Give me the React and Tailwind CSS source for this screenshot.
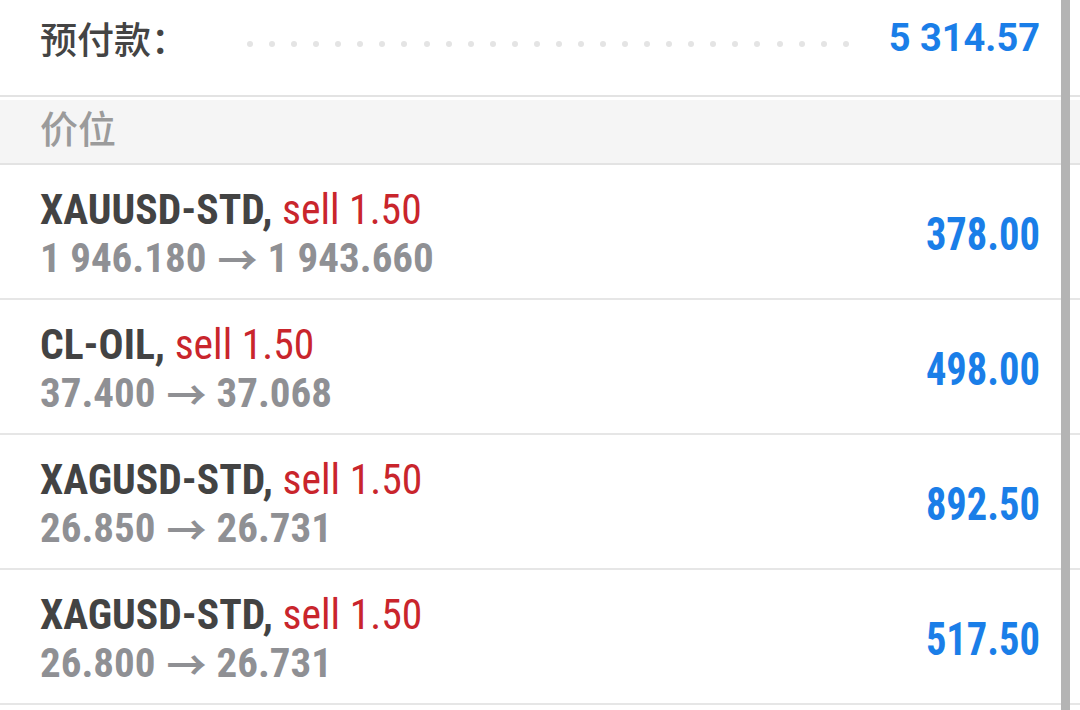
const cjk = { fontFamily: '"Noto Sans CJK SC", "Noto Sans", sans-serif' };
const cond = { fontFamily: '"Roboto Condensed", Roboto, sans-serif' };

const positions = [
  { symbol: 'XAUUSD-STD', side: 'sell 1.50', from: '1 946.180', to: '1 943.660', profit: '378.00' },
  { symbol: 'CL-OIL', side: 'sell 1.50', from: '37.400', to: '37.068', profit: '498.00' },
  { symbol: 'XAGUSD-STD', side: 'sell 1.50', from: '26.850', to: '26.731', profit: '892.50' },
  { symbol: 'XAGUSD-STD', side: 'sell 1.50', from: '26.800', to: '26.731', profit: '517.50' },
];

const dots = Array.from({ length: 28 });

export default function App() {
  return (
    <div className="relative h-[710px] w-[1080px] overflow-hidden bg-white">
      {/* margin row */}
      <div className="flex h-[97px] items-start border-b-2 border-[#e3e3e3] pl-[40px] pr-[40px] pt-[14px]">
        <span style={cjk} className="text-[37px] font-medium leading-[48px] text-[#444]">预付款：</span>
        <div className="ml-[59px] mr-[40px] flex h-[48px] flex-1 items-center justify-between pt-[12px]">
          {dots.map((_, i) => (
            <span key={i} className="h-[6px] w-[6px] rounded-full bg-[#e4e4e4]" />
          ))}
        </div>
        <span style={{ fontFamily: 'Roboto, sans-serif' }} className="text-[38px] font-bold leading-[48px] text-[#1a7ee8]">5 314.57</span>
      </div>

      {/* section header */}
      <div className="mt-[3px] flex h-[65px] items-center border-b-2 border-[#e3e3e3] bg-[#f5f5f5] pb-[10px] pl-[40px]">
        <span style={cjk} className="text-[38px] font-medium leading-[48px] text-[#9b9b9b]">价位</span>
      </div>

      {/* positions */}
      {positions.map((p, i) => (
        <div key={i} className="flex h-[135px] items-center justify-between border-b-2 border-[#e6e6e6] pl-[40px] pr-[40px] pt-[4px]" style={cond}>
          <div className="flex flex-col">
            <div className="h-[48px] whitespace-nowrap text-[41.6px] leading-[48px]">
              <span className="font-bold text-[#434343]">{p.symbol}, </span>
              <span className="text-[#c9252c]">{p.side}</span>
            </div>
            <div className="flex h-[48px] items-center whitespace-nowrap text-[41px] font-bold leading-[48px] text-[#8f9094]">
              <span>{p.from}</span>
              <span style={cjk} className="ml-[11px] mr-[10px] text-[40px] leading-[48px]">→</span>
              <span>{p.to}</span>
            </div>
          </div>
          <span className="origin-right scale-y-[1.13] text-[40.5px] font-bold leading-[48px] text-[#1a7ee8]">{p.profit}</span>
        </div>
      ))}

      {/* scrollbar */}
      <div className="absolute bottom-0 right-[10px] top-0 w-[9px] bg-[#b4b4b4]" />
    </div>
  );
}
